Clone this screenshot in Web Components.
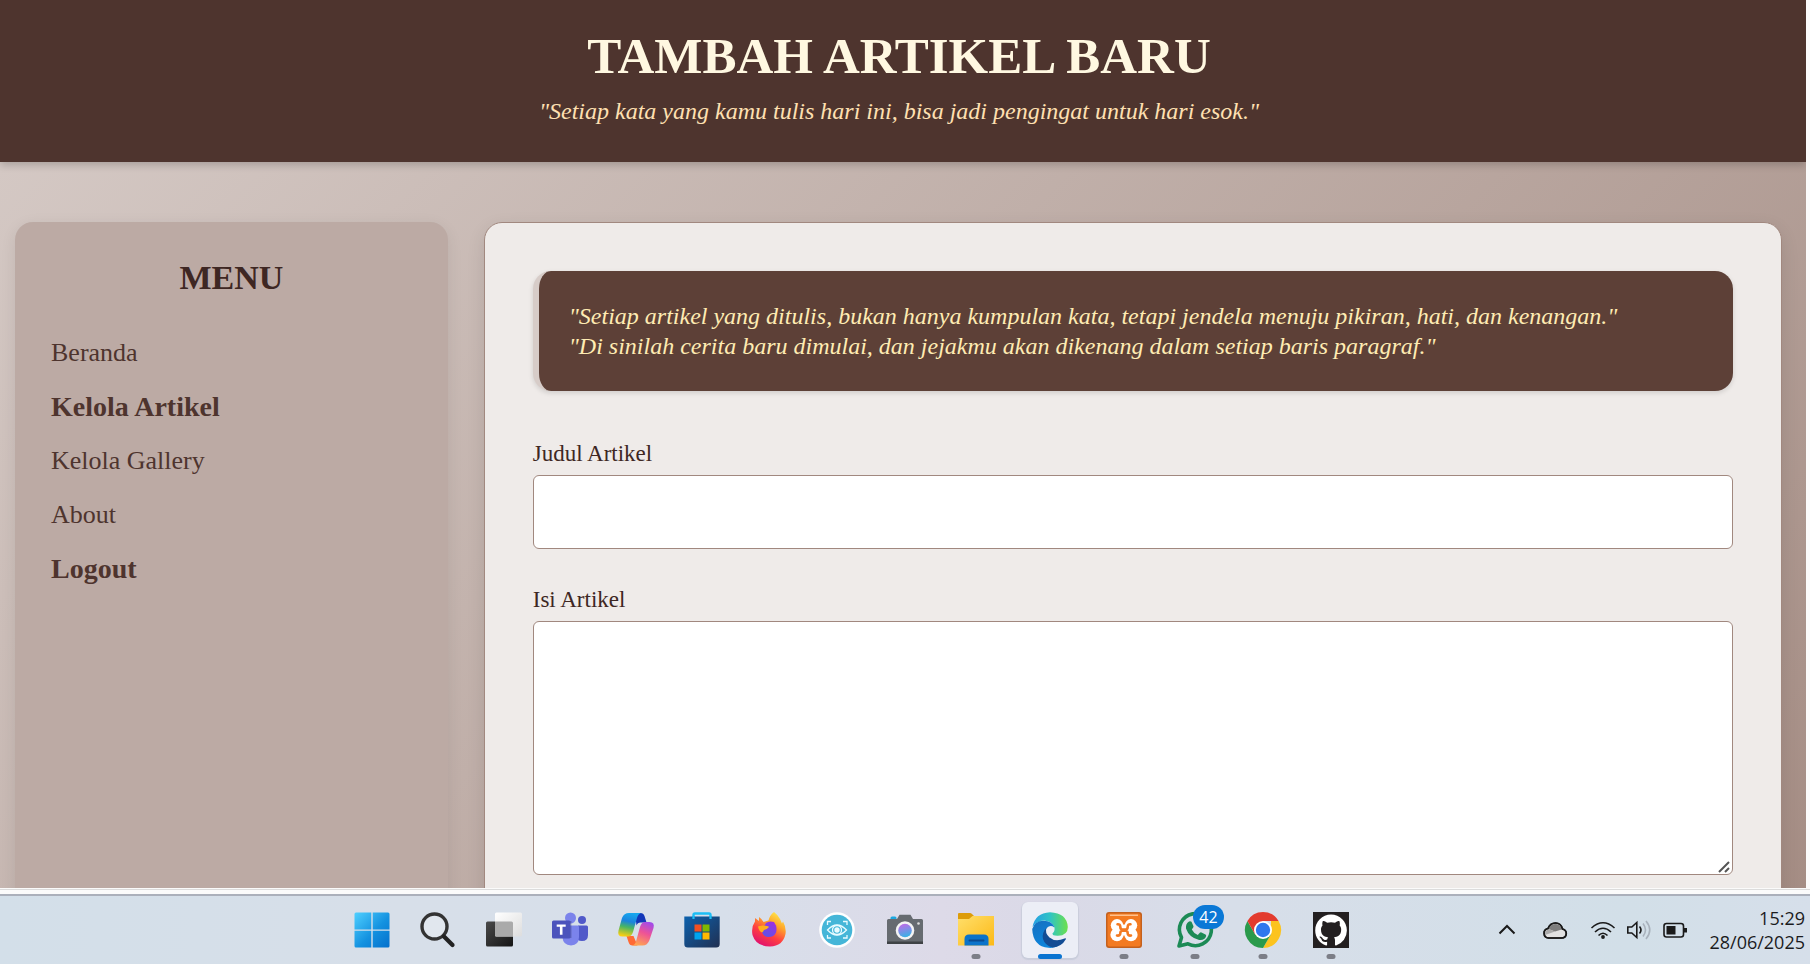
<!DOCTYPE html>
<html lang="id">
<head>
<meta charset="utf-8">
<title>Tambah Artikel Baru</title>
<style>
html,body{margin:0;height:100%}
body{font-family:Georgia,"Liberation Serif",serif;color:#3e2723;background:#f7f7f7;overflow:hidden}
</style>
</head>
<body>
<desktop-screen>
  <page-view>
    <site-header slot="header" heading="TAMBAH ARTIKEL BARU">"Setiap kata yang kamu tulis hari ini, bisa jadi pengingat untuk hari esok."</site-header>
    <side-menu heading="MENU">
      <menu-link href="#beranda">Beranda</menu-link>
      <menu-link href="#artikel" strong>Kelola Artikel</menu-link>
      <menu-link href="#gallery">Kelola Gallery</menu-link>
      <menu-link href="#about">About</menu-link>
      <menu-link href="#logout" strong>Logout</menu-link>
    </side-menu>
    <content-card>
      <quote-box>"Setiap artikel yang ditulis, bukan hanya kumpulan kata, tetapi jendela menuju pikiran, hati, dan kenangan."<br>"Di sinilah cerita baru dimulai, dan jejakmu akan dikenang dalam setiap baris paragraf."</quote-box>
      <form-field label="Judul Artikel"></form-field>
      <form-field label="Isi Artikel" multiline></form-field>
    </content-card>
  </page-view>
  <task-bar slot="taskbar"></task-bar>
</desktop-screen>

<script>
const define = (name, css, html, setup) => {
  const t = document.createElement('template');
  t.innerHTML = `<style>*{box-sizing:border-box}${css}</style>${html}`;
  customElements.define(name, class extends HTMLElement {
    constructor() {
      super();
      this.attachShadow({mode: 'open'}).appendChild(t.content.cloneNode(true));
    }
    connectedCallback() { if (setup) setup(this, this.shadowRoot); }
  });
};

define('desktop-screen', `
  :host{display:flex;flex-direction:column;height:100vh}
  main{flex:1;min-height:0;padding:0 4px 6px 0;background:linear-gradient(#dcdcdc,#dcdcdc) bottom 4px left 0/100% 1px no-repeat,#fbfbfb}
`, `<main><slot></slot></main><slot name="taskbar"></slot>`);

define('page-view', `
  :host{display:block;height:100%;overflow:hidden;background:linear-gradient(135deg,#d7ccc8,#a1887f 108%)}
  .columns{display:grid;grid-template-columns:1fr 3fr;gap:36px;padding:60px 24px 60px 15px}
`, `<slot name="header"></slot><div class="columns"><slot></slot></div>`);

define('site-header', `
  :host{display:block;position:relative;background:#4e342e;padding:26px 8px 36px 0;text-align:center;box-shadow:0 3px 8px rgba(0,0,0,.2)}
  h1{margin:0;font-size:51px;line-height:60px;color:#fff8e1;font-weight:bold}
  p{margin:10px 0 0;font-size:24px;line-height:30px;color:#ffe0b2;font-style:italic}
`, `<h1></h1><p><slot></slot></p>`, (el, r) => { r.querySelector('h1').textContent = el.getAttribute('heading'); });

define('side-menu', `
  :host{display:block;background:#bcaaa4;border-radius:18px;padding:36px;box-shadow:0 4px 16px rgba(0,0,0,.08)}
  h2{margin:0 0 40px;font-size:34px;line-height:40px;text-align:center;color:#3e2723}
  nav{display:grid;gap:24px}
`, `<h2></h2><nav><slot></slot></nav>`, (el, r) => { r.querySelector('h2').textContent = el.getAttribute('heading'); });

define('menu-link', `
  :host{display:block;font-size:26px;line-height:30px}
  :host([strong]){font-size:28px;font-weight:bold}
  a{color:#4e342e;text-decoration:none}
`, `<a><slot></slot></a>`, (el, r) => { r.querySelector('a').href = el.getAttribute('href'); });

define('content-card', `
  :host{display:block;background:#efebe9;border:1px solid #a1887f;border-radius:18px;padding:48px;box-shadow:0 6px 18px rgba(0,0,0,.1)}
  section{display:grid;gap:36px}
`, `<section><slot></slot></section>`);

define('quote-box', `
  :host{display:block;margin-bottom:12px;background:#5d4037;border-left:6px solid #d7ccc8;border-radius:18px;padding:30px;
    color:#ffecb3;font-size:24px;line-height:30px;font-style:italic;box-shadow:0 2px 5px rgba(0,0,0,.13)}
`, `<slot></slot>`);

define('form-field', `
  :host{display:block}
  label{display:block;font-size:23px;line-height:30px;margin-bottom:6px;color:#3e2723}
  input,textarea{display:block;width:100%;height:74px;padding:18px;border:1px solid #a1887f;border-radius:6px;background:#fff;font:inherit;font-size:23px;color:#3e2723;outline:0}
  textarea{height:254px;resize:vertical}
  textarea::-webkit-resizer{background:url("data:image/svg+xml,%3Csvg xmlns='http://www.w3.org/2000/svg' width='15' height='15'%3E%3Cpath d='M2 13L12 3M8 13l4-4' stroke='%23555' stroke-width='2'/%3E%3C/svg%3E") no-repeat}
`, `<label for="control"></label>`, (el, r) => {
  const label = r.querySelector('label');
  label.textContent = el.getAttribute('label');
  if (r.getElementById('control')) return;
  const c = document.createElement(el.hasAttribute('multiline') ? 'textarea' : 'input');
  c.id = 'control';
  label.after(c);
});

const ICONS = {
start:`<defs><linearGradient id="g" x1="0" y1="0" x2="1" y2="1"><stop stop-color="#4fd0ff"/><stop offset=".55" stop-color="#1492e0"/><stop offset="1" stop-color="#0470cc"/></linearGradient></defs><path fill="url(#g)" d="M2 .5h15.300v17H.5V2Q.5.500 2 .5zM18.700.5H34q1.500 0 1.500 1.500v15.500H18.700zM.5 18.700h16.800v16.800H2Q.5 35.500.5 34zM18.700 18.700h16.800V34q0 1.500-1.500 1.500H18.700z"/>`,
search:`<g fill="none" stroke-linecap="round"><circle cx="14.500" cy="14.500" r="12.500" stroke="#333" stroke-width="3.400" fill="#fff" fill-opacity=".25"/><path d="M24 24.500l8.500 8.500" stroke="#222" stroke-width="4.200"/></g>`,
taskview:`<defs><linearGradient id="a" x2="1" y2="1"><stop stop-color="#4a4a4a"/><stop offset="1" stop-color="#151515"/></linearGradient><linearGradient id="b" x2="1" y2="1"><stop stop-color="#fff"/><stop offset="1" stop-color="#ddd"/></linearGradient></defs><rect x="0" y="9.500" width="27" height="25" rx="1.500" fill="url(#a)"/><rect x="9" y=".5" width="27" height="24" rx="1.500" fill="url(#b)"/><path d="M9 9.500h16.500Q27 9.500 27 11v13.500H10.500Q9 24.500 9 23z" fill="#aaa"/>`,
teams:`<circle cx="18.500" cy="6" r="5.500" fill="#7b83eb"/><circle cx="30" cy="8" r="4" fill="#5059c9"/><path fill="#5059c9" d="M26 13.500h8.500q1.500 0 1.500 1.500v8q0 6-6 6-3 0-4-1z"/><path fill="#7b83eb" d="M14 13.500h11.500q1.500 0 1.500 1.500v10q0 8-8 8.500-8-.5-8.500-8V15z"/><path opacity=".2" d="M14 9h5.500v17H11v-3z"/><rect x="0" y="8.500" width="18.500" height="18" rx="1.500" fill="#4b53bc"/><path fill="#fff" d="M4.700 12.500h9v2.300h-3.200v8H7.900v-8H4.700z"/>`,
copilot:`<defs><linearGradient id="a" x1=".5" x2=".3" y2="1"><stop stop-color="#16a7ee"/><stop offset=".35" stop-color="#1b83dd"/><stop offset=".6" stop-color="#48b564"/><stop offset="1" stop-color="#ffd010"/></linearGradient><linearGradient id="b" x1=".7" x2=".3" y2="1"><stop stop-color="#a34be8"/><stop offset=".45" stop-color="#ee5396"/><stop offset="1" stop-color="#ffa650"/></linearGradient></defs><path fill="#1236b8" d="M17 1h5.500q3 0 4 3l2 6.500h-6q-3 0-4 3z"/><path fill="#ff6a35" d="M8.500 24h7l4 9.500h-5q-3 0-4-3.500z"/><path fill="url(#a)" d="M11 1h12q-3 1-4 5l-4 14q-1.500 4.500-5 4.500H4.500q-5.500 0-4-6L4 6q2-5 7-5z"/><path fill="url(#b)" d="M27 10h4.500q5.500 0 4 6l-4 12q-2 5.500-7 5.500H14q3-.5 4-4l4-14.500q1.500-5 5-5z"/>`,
store:`<defs><linearGradient id="a" x2="1" y2="1"><stop stop-color="#0c61ad"/><stop offset="1" stop-color="#213052"/></linearGradient></defs><path d="M9.500 6V3q0-1.500 1.500-1.500h14q1.500 0 1.500 1.500v3" fill="none" stroke="#1cbef5" stroke-width="2.400"/><path fill="url(#a)" d="M.3 4.500h35.400V32q0 3.500-3.500 3.500H3.800Q.3 35.500.3 32z"/><path fill="none" stroke="#1cbef5" stroke-width="2.200" d="M9.500 4v3M26.500 4v3"/><path fill="#f25022" d="M10.500 12.500h7v7h-7z"/><path fill="#7fba00" d="M18.500 12.500h7v7h-7z"/><path fill="#00a4ef" d="M10.500 20.500h7v7h-7z"/><path fill="#ffb900" d="M18.500 20.500h7v7h-7z"/>`,
firefox:`<defs><linearGradient id="a" x1=".85" y1="0" x2=".3" y2="1"><stop stop-color="#fff44f"/><stop offset=".35" stop-color="#ffa42a"/><stop offset=".65" stop-color="#ff4040"/><stop offset="1" stop-color="#e01070"/></linearGradient><linearGradient id="b" x1=".8" x2=".2" y2="1"><stop stop-color="#a02fe0"/><stop offset="1" stop-color="#5a55e8"/></linearGradient></defs><path fill="url(#a)" d="M23 0q4 3 6 7l2 4.500 1-2q3.500 6 2.500 12.500Q32 34 19 34.500 5 34.500 1.500 23 0 15 4 9.500V6l4 3V5q3 2 4.500 5l5-1.500Q18.500 3.500 23 0z"/><path fill="url(#b)" d="M15 11q3-2.500 8-1l2 3.500q1 4 0 7-2 4.500-7.500 4.500-6-.5-7-6.500z"/><path fill="#ffae1e" d="M7 14.500q5-1.500 9-.5 2 .5 2 1-2 2.500-5 3-1 2-2 2.500-3-1-4-6z"/>`,
eye:`<circle cx="18" cy="18" r="17.800" fill="#fff"/><circle cx="18" cy="18" r="15.300" fill="#45b6d8"/><g fill="none" stroke="#e9fbff" stroke-width="1.300"><path d="M8.500 13V9.500H12M24 9.500h4V13M28 23v3h-4M12 26H8.500v-3M8.500 18q9.500-10 19 0-9.500 10-19 0z"/><circle cx="18" cy="18" r="4.500"/></g><circle cx="18" cy="18" r="2.700" fill="#e9fbff"/>`,
camera:`<path fill="#1ba8e0" d="M3.500 8V6q0-1.500 1.500-1.500h3Q9.500 4.500 9.500 6v2z"/><path fill="#666b70" d="M1.500 7H10l2.500-4.200h11L26 7h8.500Q36 7 36 8.500V32H0V8.500Q0 7 1.500 7z"/><path fill="#3e4245" d="M0 29.500h36V32H0z"/><circle cx="18" cy="18.500" r="9.300" fill="#f3f3f3"/><defs><linearGradient id="a" x1=".3" x2=".6" y2="1"><stop stop-color="#c16be8"/><stop offset="1" stop-color="#35b4e5"/></linearGradient></defs><circle cx="18" cy="18.500" r="6.800" fill="url(#a)"/><circle cx="31.500" cy="11.500" r="1.300" fill="#ddd"/>`,
folder:`<defs><linearGradient id="a" x2="1" y2="1"><stop stop-color="#ffdf6b"/><stop offset="1" stop-color="#fcb916"/></linearGradient></defs><path fill="#dd9c09" d="M1 1h11q1 0 2 1l2.500 2.500v5H0V2q0-1 1-1z"/><path fill="url(#a)" d="M0 7h11l3.500-3H36v29.500H0z"/><path fill="#0b73ca" d="M6.500 33.500V27q0-4.500 4.500-4.500h15q4.500 0 4.500 4.500v6.500z"/><path d="M11.500 28.500h14" stroke="#0a4a90" stroke-width="2" stroke-linecap="round"/>`,
edge:`<defs><linearGradient id="a" y1=".3" x2="1" y2=".3"><stop stop-color="#259ee5"/><stop offset=".5" stop-color="#2fc4c4"/><stop offset="1" stop-color="#6de04c"/></linearGradient><linearGradient id="b" x2=".5" y2="1"><stop stop-color="#1670c0"/><stop offset="1" stop-color="#0c86dd"/></linearGradient></defs><path fill="url(#a)" d="M.500 15Q3 1 18 .2 35 1 35.800 15q0 8.500-9.800 8.800-6 .2-5.500-2.500 2.500-2 2-5.500Q20.500 9 12 8.500 5 9 .5 15z"/><path fill="url(#b)" d="M.2 17Q2.500 9 11.500 8.800q9 .2 10.800 6.700-4-3-7.500.5-3 3.500-1.500 8.500Q16.500 33 27 33.500q-5 3-10.500 2.300Q1 34.500.2 17z"/><path fill="#124c94" d="M14.500 15.800q-5 5.200-3.500 11.200 2 6.500 9.500 8.500 9-.5 13.500-8.500 0-1-1.500-.5-9 4-15-1-5-4.500-3-9.700z"/>`,
xampp:`<rect width="36" height="36" rx="3" fill="#c4601d"/><rect x="1.500" y="1.500" width="33" height="33" rx="2" fill="#f37a21"/><path d="M4 2.500h28v1.500H4z" fill="#ffc18d"/><g fill="#fff"><circle cx="11" cy="13.300" r="6.200"/><circle cx="25" cy="13.300" r="6.200"/><circle cx="11" cy="22.700" r="6.600"/><circle cx="25" cy="22.700" r="6.600"/><path d="M10 12.500h16v11H10z"/></g><path fill="none" stroke="#f37a21" stroke-width="2.600" stroke-linecap="round" d="M11.500 12.300q2.700-.3 2.800 2.500 0 2.700 2 2.700h3.400q2 0 2-2.700.1-2.800 2.800-2.500M11 23.500q3.300.5 3.300-2.200 0-2.500 2-2.500h3.400q2 0 2 2.500 0 2.700 3.300 2.200"/>`,
whatsapp:`<path fill="none" stroke="#1c8a55" stroke-width="3.600" stroke-linejoin="round" d="M2 34l2.500-8.500a16 16 0 1 1 6.500 6.300z"/><path fill="#1c8a55" d="M12 9.500q1.500-.5 2.500.3l2 4.500q.3 1-1.700 3.200 2 4 6 5.500l2-2.200q.8-.7 1.700-.3l4 2q1 .5.600 1.800-1.600 4.500-7 3.700Q12 25.500 9 16.500q-.5-5 3-7z"/>`,
chrome:`<path fill="#e33b2e" d="M2.400 9A18 18 0 0 1 33.600 9H18z"/><path fill="#fcc31e" d="M33.600 9A18 18 0 0 1 18 36l7.800-13.500L26 9z"/><path fill="#2a9a4b" d="M2.400 9A18 18 0 0 0 18 36l7.800-13.500L10.200 22.500z"/><path fill="#e33b2e" d="M2.400 9l7.800 13.500L18 9z"/><circle cx="18" cy="18" r="9" fill="#fff"/><circle cx="18" cy="18" r="7.200" fill="#2f78ed"/>`,
github:`<path fill="#231f20" d="M0 0h36v36H0z"/><g transform="translate(2.200 2.600) scale(1.980)"><path fill="#fff" d="M8 0C3.580 0 0 3.580 0 8c0 3.540 2.290 6.530 5.470 7.590.4.070.55-.17.55-.38 0-.19-.01-.82-.01-1.490-2.010.37-2.530-.49-2.690-.94-.09-.23-.48-.94-.82-1.130-.28-.15-.68-.52-.01-.53.63-.01 1.080.58 1.230.82.72 1.210 1.870.87 2.330.66.07-.52.28-.87.51-1.070-1.780-.2-3.640-.89-3.640-3.950 0-.87.31-1.590.82-2.150-.08-.2-.36-1.020.08-2.120 0 0 .67-.21 2.200.82a7.600 7.600 0 0 1 4 0c1.530-1.040 2.200-.82 2.200-.82.44 1.100.16 1.920.08 2.120.51.560.82 1.270.82 2.150 0 3.070-1.870 3.750-3.650 3.950.29.250.54.730.54 1.480 0 1.070-.01 1.930-.01 2.200 0 .21.150.46.550.38A8 8 0 0 0 16 8c0-4.420-3.580-8-8-8z"/></g>`
};

define('app-button', `
  :host{display:block;height:58px}
  button{position:relative;display:grid;place-items:center;width:56px;height:56px;margin:0 auto;padding:0;border:0;border-radius:6px;background:none}
  :host([active]) button{background:#eceef6;box-shadow:0 1px 1px 1px #c9cddb}
  svg{display:block;width:36px;height:36px;overflow:visible}
  .mark{display:none;position:absolute;left:50%;bottom:-1px;transform:translateX(-50%);width:9px;height:5px;border-radius:3px;background:#7c7e87}
  :host([running]) .mark{display:block}
  :host([active]) .mark{width:24px;background:#0a74d1}
  .badge{position:absolute;left:26px;top:3px;min-width:31px;height:24px;border-radius:12px;background:#0a78d6;color:#fff;font:16px/24px "Open Sans",sans-serif;text-align:center}
  .badge:empty{display:none}
`, `<button type="button"><svg viewBox="0 0 36 36" aria-hidden="true"></svg><span class="badge"></span><span class="mark"></span></button>`, (el, r) => {
  const name = el.getAttribute('icon');
  r.querySelector('svg').innerHTML = ICONS[name];
  r.querySelector('button').setAttribute('aria-label', name);
  r.querySelector('.badge').textContent = el.getAttribute('badge') || '';
});

define('system-tray', `
  :host{display:flex;align-items:center;justify-content:flex-end;padding-right:5px;font:18px/24px "Open Sans","Noto Sans",sans-serif;color:#1b1b1d}
  button{display:block;padding:0;border:0;background:none;color:inherit;font:inherit}
  svg{display:block;height:24px;fill:none;stroke:#1a1a1a;stroke-width:1.6;overflow:visible}
  .chevron{margin-right:28px}.cloud{margin-right:24px}
  .status{display:flex;gap:12px;margin-right:22px}
  .clock{text-align:right}
  time{display:block}
`, `
<button class="chevron" type="button" aria-label="Hidden icons"><svg width="16" viewBox="0 0 16 24"><path d="M.5 15.500L8 8l7.500 7.500" stroke-width="2"/></svg></button>
<button class="cloud" type="button" aria-label="Cloud"><svg width="24" viewBox="0 0 24 24"><path fill="#e2e2e2" d="M5.500 20A4.800 4.800 0 0 1 5 10.500Q7 5 12.500 5t7 6Q23.300 12 23.300 15.500 23 20 18.500 20z"/><path fill="#7d7d7d" stroke="none" d="M5.500 11Q7 6 12.500 6q5 0 6.200 5.500L12 13.500z"/><path fill="#aaa" stroke="none" d="M2 17q-.5-5 4-5.800l6 2.300z"/><path d="M5.500 20A4.800 4.800 0 0 1 5 10.500Q7 5 12.500 5t7 6Q23.300 12 23.300 15.500 23 20 18.500 20z"/></svg></button>
<button class="status" type="button" aria-label="Network, volume, battery">
<svg width="24" viewBox="0 0 24 24"><path d="M.5 10q11.500-10.500 23 0M4 14q8-7.500 16 0M7.500 17.500q4.500-4.500 9 0"/><circle cx="12" cy="19" r="1.900" fill="#1a1a1a" stroke="none"/></svg>
<svg width="24" viewBox="0 0 24 24"><path d="M.8 9h4l5-4.500v15L4.800 15h-4zM12.500 8.500q3 3.500 0 7"/><path stroke="#a9b2bc" d="M16 5.500q5 6.500 0 13M19 3q7.500 9 0 18"/></svg>
<svg width="24" viewBox="0 0 24 24"><rect x="1" y="5.500" width="19.500" height="13.500" rx="2.500"/><rect x="3.500" y="8" width="9" height="8.500" fill="#1a1a1a" stroke="none"/><path d="M22.500 10v4.500" stroke-width="3"/></svg>
</button>
<button class="clock" type="button"><time>15:29</time><time>28/06/2025</time></button>
`);

define('task-bar', `
  :host{display:grid;grid-template-columns:minmax(0,339fr) auto minmax(0,445fr);height:68px;border-top:2px solid #abb0bb;
    background:linear-gradient(90deg,#d3dfe9,#d7dfe9 22%,#d7dfea 40%,#dddae8 52%,#dad9e7 58%,#d7dee9 68%,#d2dfe8 90%,#d6dfea)}
  .apps,.apps div{display:flex}
  .apps{padding-top:6px}
  .core app-button{width:66px}
  .pinned app-button,.open app-button{width:68px}
  .wide app-button{width:74px}
  system-tray{grid-column:3}
`, `<span></span><div class="apps">
<div class="core"><app-button icon="start"></app-button><app-button icon="search"></app-button><app-button icon="taskview"></app-button><app-button icon="teams"></app-button><app-button icon="copilot"></app-button><app-button icon="store"></app-button></div>
<div class="pinned"><app-button icon="firefox"></app-button><app-button icon="eye"></app-button><app-button icon="camera"></app-button></div>
<div class="wide"><app-button icon="folder" running></app-button><app-button icon="edge" running active></app-button><app-button icon="xampp" running></app-button></div>
<div class="open"><app-button icon="whatsapp" running badge="42"></app-button><app-button icon="chrome" running></app-button><app-button icon="github" running></app-button></div>
</div><system-tray></system-tray>`);
</script>
</body>
</html>
